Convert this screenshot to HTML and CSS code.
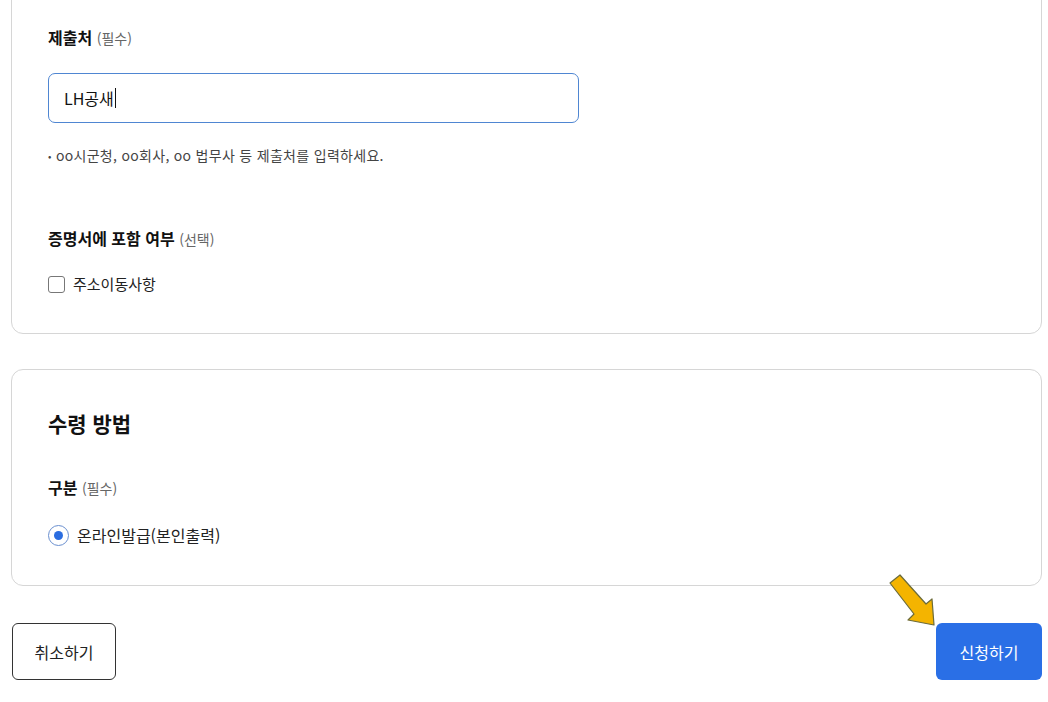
FILE: index.html
```html
<!DOCTYPE html>
<html lang="ko">
<head>
<meta charset="utf-8">
<title>신청</title>
<link rel="stylesheet" href="styles.css">
</head>
<body>
<div class="page">
  <section class="card card-first">
    <div class="label"><strong>제출처</strong> <span class="sub">(필수)</span></div>
    <div class="input">LH공새<span class="caret"></span></div>
    <p class="help"><span class="bullet">•</span> oo시군청, oo회사, oo 법무사 등 제출처를 입력하세요.</p>
    <div class="label label-gap"><strong>증명서에 포함 여부</strong> <span class="sub">(선택)</span></div>
    <label class="check-row"><span class="checkbox"></span><span>주소이동사항</span></label>
  </section>

  <section class="card card-second">
    <h2 class="title">수령 방법</h2>
    <div class="label label-gap2"><strong>구분</strong> <span class="sub">(필수)</span></div>
    <label class="radio-row"><span class="radio"><span class="dot"></span></span><span>온라인발급(본인출력)</span></label>
  </section>

  <div class="actions">
    <button class="btn btn-cancel">취소하기</button>
    <button class="btn btn-submit">신청하기</button>
    <svg class="arrow" width="54" height="56" viewBox="0 0 54 56">
      <polygon points="4,10 14,2 40,31 46,26 48,52 22,47 28,41" fill="#f4b400" stroke="#6b6b3a" stroke-width="1.2" stroke-linejoin="round"/>
    </svg>
  </div>
</div>
</body>
</html>
```
FILE: styles.css
```css
* { box-sizing: border-box; }
html, body { margin: 0; padding: 0; background: #fff; }
body {
  font-family: "Noto Sans CJK KR", "Noto Sans", sans-serif;
  color: #111;
  overflow: hidden;
}
.page {
  padding: 0 6px 0 11px;
}
.card {
  border: 1px solid #d6d6d6;
  border-radius: 12px;
  padding: 0 36px;
}
.card-first {
  margin-top: -15px;
  padding-top: 40px;
  padding-bottom: 37px;
}
.card-second {
  margin-top: 35px;
  padding-top: 39px;
  padding-bottom: 38px;
}
.label {
  font-size: 16px;
  line-height: 22px;
  color: #111;
}
.label strong { font-weight: 700; }
.label .sub {
  font-size: 14px;
  color: #666;
}
.input {
  margin-top: 24px;
  width: 531px;
  height: 50px;
  border: 1px solid #4f86d2;
  border-radius: 7px;
  padding: 0 15px;
  display: flex;
  align-items: center;
  font-size: 16px;
  color: #111;
}
.caret {
  display: inline-block;
  width: 1px;
  height: 20px;
  background: #111;
  margin-left: 1px;
}
.help {
  margin: 22px 0 0;
  font-size: 14px;
  line-height: 20px;
  letter-spacing: 0.3px;
  color: #444;
}
.bullet {
  font-size: 10px;
  vertical-align: 1px;
}
.label-gap { margin-top: 61px; }
.check-row {
  margin-top: 22px;
  display: flex;
  align-items: center;
  gap: 8px;
  font-size: 15px;
  line-height: 24px;
  color: #222;
}
.checkbox {
  width: 17px;
  height: 17px;
  border: 1.5px solid #777;
  border-radius: 3px;
  margin-top: 1px;
}
.title {
  margin: 0;
  font-size: 21px;
  line-height: 28px;
  font-weight: 700;
  color: #111;
}
.label-gap2 { margin-top: 39px; }
.radio-row {
  margin-top: 24px;
  display: flex;
  align-items: center;
  gap: 8px;
  font-size: 16px;
  line-height: 24px;
  color: #222;
}
.radio {
  width: 21px;
  height: 21px;
  border: 1.5px solid #6a8fcf;
  border-radius: 50%;
  display: flex;
  align-items: center;
  justify-content: center;
}
.dot {
  width: 9px;
  height: 9px;
  border-radius: 50%;
  background: #2b6de0;
}
.actions {
  position: relative;
  margin-top: 37px;
  display: flex;
  justify-content: space-between;
  padding-left: 1px;
}
.btn {
  height: 57px;
  border-radius: 6px;
  font-family: inherit;
  font-size: 16px;
  cursor: pointer;
}
.btn-cancel {
  width: 104px;
  background: #fff;
  border: 1px solid #333;
  color: #222;
}
.btn-submit {
  width: 106px;
  background: #2a6fe6;
  border: none;
  color: #fff;
}
.arrow {
  position: absolute;
  left: 875px;
  top: -50px;
}
```
